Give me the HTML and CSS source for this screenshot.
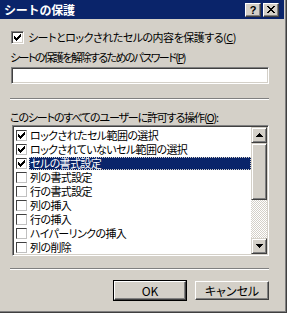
FILE: index.html
```html
<!DOCTYPE html>
<html lang="ja">
<head>
<meta charset="utf-8">
<link rel="stylesheet" href="styles.css">
</head>
<body>
<div class="window">
  <div class="titlebar">
    <span class="title">シートの保護</span>
    <div class="tbtns">
      <span class="tbtn help">?</span>
      <span class="tbtn close"><svg width="8" height="7" viewBox="0 0 8 7" shape-rendering="crispEdges"><path d="M0 0h2v1h-2z M1 1h2v1h-2z M2 2h1v1h-1z M5 2h1v1h-1z M3 3h2v1h-2z M2 4h1v1h-1z M5 4h1v1h-1z M1 5h2v1h-2z M0 6h2v1h-2z M6 0h2v1h-2z M5 1h2v1h-2z M5 5h2v1h-2z M6 6h2v1h-2z M3 2h2v1h-2z M3 4h2v1h-2z" fill="#000"/></svg></span>
    </div>
  </div>
  <div class="content">
    <div class="check-row">
      <span class="cb"><svg width="7" height="7" viewBox="0 0 7 7" shape-rendering="crispEdges"><path d="M0 2h1v3H0z M1 3h1v3H1z M2 4h1v3H2z M3 3h1v3H3z M4 2h1v3H4z M5 1h1v3H5z M6 0h1v3H6z" fill="#000"/></svg></span>
      <span class="txt">シートとロックされたセルの内容を保護する(<u>C</u>)</span>
    </div>
    <div class="lbl pw-lbl">シートの保護を解除するためのパスワード(<u>P</u>)</div>
    <div class="input"></div>
    <div class="sep sep1"></div>
    <div class="lbl ops-lbl">このシートのすべてのユーザーに許可する操作(<u>O</u>):</div>
    <div class="list">
      <div class="items">
        <div class="item"><span class="lcb on"><svg width="7" height="7" viewBox="0 0 7 7" shape-rendering="crispEdges"><path d="M0 2h1v3H0z M1 3h1v3H1z M2 4h1v3H2z M3 3h1v3H3z M4 2h1v3H4z M5 1h1v3H5z M6 0h1v3H6z" fill="#000"/></svg></span><span class="itxt">ロックされたセル範囲の選択</span></div>
        <div class="item"><span class="lcb on"><svg width="7" height="7" viewBox="0 0 7 7" shape-rendering="crispEdges"><path d="M0 2h1v3H0z M1 3h1v3H1z M2 4h1v3H2z M3 3h1v3H3z M4 2h1v3H4z M5 1h1v3H5z M6 0h1v3H6z" fill="#000"/></svg></span><span class="itxt">ロックされていないセル範囲の選択</span></div>
        <div class="item selected"><span class="lcb on"><svg width="7" height="7" viewBox="0 0 7 7" shape-rendering="crispEdges"><path d="M0 2h1v3H0z M1 3h1v3H1z M2 4h1v3H2z M3 3h1v3H3z M4 2h1v3H4z M5 1h1v3H5z M6 0h1v3H6z" fill="#000"/></svg></span><span class="itxt">セルの書式設定</span></div>
        <div class="item"><span class="lcb"></span><span class="itxt">列の書式設定</span></div>
        <div class="item"><span class="lcb"></span><span class="itxt">行の書式設定</span></div>
        <div class="item"><span class="lcb"></span><span class="itxt">列の挿入</span></div>
        <div class="item"><span class="lcb"></span><span class="itxt">行の挿入</span></div>
        <div class="item"><span class="lcb"></span><span class="itxt">ハイパーリンクの挿入</span></div>
        <div class="item"><span class="lcb"></span><span class="itxt">列の削除</span></div>
      </div>
      <div class="scrollbar">
        <div class="sbtn"><svg width="7" height="4" viewBox="0 0 7 4" shape-rendering="crispEdges"><path d="M3 0h1v1h-1z M2 1h3v1h-3z M1 2h5v1h-5z M0 3h7v1h-7z" fill="#000"/></svg></div>
        <div class="thumb"></div>
        <div class="track"></div>
        <div class="sbtn"><svg width="7" height="4" viewBox="0 0 7 4" shape-rendering="crispEdges"><path d="M0 0h7v1h-7z M1 1h5v1h-5z M2 2h3v1h-3z M3 3h1v1h-1z" fill="#000"/></svg></div>
      </div>
    </div>
    <div class="sep sep2"></div>
    <div class="buttons">
      <div class="btn default"><span class="btn-in">OK</span></div>
      <div class="btn cancel"><span class="btn-in">キャンセル</span></div>
    </div>
  </div>
</div>
</body>
</html>
```

FILE: styles.css
```css
* { box-sizing: border-box; }
html, body { margin: 0; padding: 0; }
body {
  width: 287px;
  height: 313px;
  overflow: hidden;
  background: #d4d0c8;
  font-family: "Noto Sans CJK JP", "Noto Sans", sans-serif;
  font-size: 11px;
  color: #000;
}
.window {
  width: 287px;
  height: 313px;
  background: #d4d0c8;
  border-right: 1px solid #404040;
  border-bottom: 1px solid #404040;
  box-shadow: inset -1px -1px 0 #808080;
}
.titlebar {
  height: 19px;
  background: #0a246a;
  display: flex;
  align-items: center;
  padding: 0 5px 0 4px;
  margin-right: 2px;
}
.title {
  color: #fff;
  font-weight: bold;
  font-size: 12px;
  line-height: 19px;
  letter-spacing: -0.2px;
}
.tbtns {
  margin-left: auto;
  display: flex;
  gap: 2px;
}
.tbtn {
  width: 16px;
  height: 14px;
  background: #d4d0c8;
  border-top: 1px solid #fff;
  border-left: 1px solid #fff;
  border-right: 1px solid #404040;
  border-bottom: 1px solid #404040;
  box-shadow: inset -1px -1px 0 #808080;
  display: flex;
  align-items: center;
  justify-content: center;
}
.help {
  font-family: "Liberation Sans", sans-serif;
  font-weight: bold;
  font-size: 11px;
  line-height: 12px;
}
.content {
  padding: 0 17px 0 10px;
}
.check-row {
  margin-top: 12px;
  height: 13px;
  display: flex;
  align-items: center;
}
.cb {
  width: 13px;
  height: 13px;
  margin-left: 1px;
  flex: none;
  background: #fff;
  border-top: 1px solid #808080;
  border-left: 1px solid #808080;
  border-right: 1px solid #fff;
  border-bottom: 1px solid #fff;
  box-shadow: inset 1px 1px 0 #404040, inset -1px -1px 0 #d4d0c8;
  display: flex;
  align-items: center;
  justify-content: center;
}
.txt {
  margin-left: 4px;
  line-height: 13px;
  letter-spacing: -0.5px;
  font-feature-settings: "palt";
  white-space: nowrap;
}
.lbl {
  height: 14px;
  line-height: 14px;
  font-feature-settings: "palt";
  white-space: nowrap;
}
.pw-lbl { margin-top: 6px; letter-spacing: -1.6px; }
.input {
  margin-top: 3px;
  margin-left: 1px;
  height: 17px;
  background: #fff;
  border-top: 1px solid #808080;
  border-left: 1px solid #808080;
  border-right: 1px solid #fff;
  border-bottom: 1px solid #fff;
  box-shadow: inset 1px 1px 0 #404040, inset -1px -1px 0 #d4d0c8;
}
.sep {
  height: 2px;
  border-top: 1px solid #808080;
  border-bottom: 1px solid #fff;
}
.sep1 { margin-top: 14px; }
.ops-lbl { margin-top: 10px; letter-spacing: -1.15px; }
.list {
  margin-top: 1px;
  margin-left: 2px;
  height: 131px;
  display: flex;
  background: #fff;
  border-top: 1px solid #808080;
  border-left: 1px solid #808080;
  border-right: 1px solid #fff;
  border-bottom: 1px solid #fff;
  box-shadow: inset 1px 1px 0 #404040, inset -1px -1px 0 #d4d0c8;
  padding: 1px;
}
.items {
  flex: 1;
  padding-top: 1px;
  overflow: hidden;
}
.item {
  height: 14px;
  display: flex;
  align-items: center;
}
.lcb {
  width: 11px;
  height: 11px;
  margin-left: 2px;
  flex: none;
  background: #fff;
  border-top: 1px solid #404040;
  border-left: 1px solid #404040;
  border-right: 1px solid #c0c0c0;
  border-bottom: 1px solid #c0c0c0;
  display: flex;
  align-items: center;
  justify-content: center;
}
.itxt {
  margin-left: 2px;
  padding: 0 1px;
  height: 13px;
  line-height: 13px;
  flex: 1;
  letter-spacing: -0.6px;
  font-feature-settings: "palt";
  white-space: nowrap;
}
.item.selected .itxt {
  background: #0a246a;
  color: #fff;
  outline: 1px dotted #d4d0c8;
  outline-offset: -1px;
}
.scrollbar {
  width: 16px;
  flex: none;
  display: flex;
  flex-direction: column;
}
.sbtn, .thumb {
  background: #d4d0c8;
  border-top: 1px solid #d4d0c8;
  border-left: 1px solid #d4d0c8;
  border-right: 1px solid #404040;
  border-bottom: 1px solid #404040;
  box-shadow: inset 1px 1px 0 #fff, inset -1px -1px 0 #808080;
}
.sbtn {
  height: 16px;
  display: flex;
  align-items: center;
  justify-content: center;
}
.thumb { height: 57px; }
.track {
  flex: 1;
  background: repeating-conic-gradient(#d4d0c8 0 25%, #fff 0 50%) 0 0 / 2px 2px;
}
.sep2 { margin-top: 12px; }
.buttons {
  margin-top: 10px;
  display: flex;
  justify-content: flex-end;
  gap: 8px;
}
.btn {
  width: 74px;
  height: 21px;
  display: flex;
}
.btn.default {
  border: 1px solid #000;
}
.btn-in {
  flex: 1;
  display: flex;
  align-items: center;
  justify-content: center;
  background: #d4d0c8;
  border-top: 1px solid #fff;
  border-left: 1px solid #fff;
  border-right: 1px solid #404040;
  border-bottom: 1px solid #404040;
  box-shadow: inset -1px -1px 0 #808080;
  font-size: 12px;
  line-height: 14px;
  font-feature-settings: "palt";
}
.btn.cancel { height: 19px; margin-top: 1px; }
```
